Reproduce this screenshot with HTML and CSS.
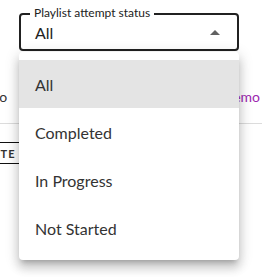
FILE: index.html
```html
<!DOCTYPE html>
<html>
<head>
<meta charset="utf-8">
<link rel="stylesheet" href="styles.css">
</head>
<body>
<div class="page">
  <div class="select">
    <span class="select-label">Playlist attempt status</span>
    <span class="select-value">All</span>
    <span class="arrow"></span>
  </div>
  <div class="info-row">
    <span class="info-left">Info</span>
    <span class="info-right">Demo</span>
  </div>
  <div class="divider"></div>
  <div class="btn-row">
    <span class="btn">Delete</span>
  </div>
</div>
<ul class="menu">
  <li class="item selected">All</li>
  <li class="item">Completed</li>
  <li class="item">In Progress</li>
  <li class="item">Not Started</li>
</ul>
</body>
</html>
```
FILE: styles.css
```css
html, body {
  margin: 0;
  padding: 0;
  background: #fff;
}
body {
  width: 262px;
  height: 277px;
  overflow: hidden;
  position: relative;
  font-family: Lato, "Noto Sans", sans-serif;
  color: rgba(0, 0, 0, 0.87);
}
.page {
  display: flex;
  flex-direction: column;
}
.select {
  position: relative;
  box-sizing: border-box;
  margin: 13px 0 0 19px;
  width: 220px;
  height: 38px;
  border: 2px solid #212121;
  border-radius: 4px;
  display: flex;
  align-items: center;
  justify-content: space-between;
  padding: 0 17px 0 14px;
}
.select-label {
  position: absolute;
  top: -9px;
  left: 9px;
  padding: 0 4px;
  background: #fff;
  font-size: 12px;
  line-height: 14px;
  color: #222;
}
.select-value {
  font-size: 16px;
  line-height: 20px;
  color: #222;
  padding-top: 1px;
}
.arrow {
  width: 0;
  height: 0;
  border-left: 5px solid transparent;
  border-right: 5px solid transparent;
  border-bottom: 5px solid #616161;
}
.info-row {
  display: flex;
  justify-content: space-between;
  margin-top: 36px;
  font-size: 14px;
  line-height: 20px;
}
.info-left {
  margin-left: -17px;
  color: #333;
}
.info-right {
  margin-right: 2px;
  color: #9c27b0;
}
.divider {
  margin-top: 16px;
  height: 1px;
  background: #dcdcdc;
}
.btn-row {
  display: flex;
  margin-top: 18px;
}
.btn {
  margin-left: -40px;
  box-sizing: border-box;
  height: 22px;
  border: 1px solid #111;
  padding: 0 8px;
  font-size: 11px;
  font-weight: 700;
  letter-spacing: 1.2px;
  text-transform: uppercase;
  color: #333;
  display: flex;
  align-items: center;
}
.menu {
  position: absolute;
  top: 52px;
  left: 19px;
  width: 220px;
  margin: 0;
  padding: 8px 0;
  list-style: none;
  background: #fff;
  border-radius: 4px;
  box-shadow: 0px 5px 5px -3px rgba(0,0,0,0.2), 0px 8px 10px 1px rgba(0,0,0,0.14), 0px 3px 14px 2px rgba(0,0,0,0.12);
}
.item {
  height: 48px;
  padding: 0 16px;
  display: flex;
  align-items: center;
  font-size: 16px;
  color: #333;
}
.item.selected {
  background: #e4e4e4;
}
```
